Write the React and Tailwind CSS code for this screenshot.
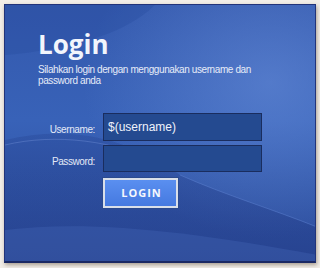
import React from "react";

export default function App() {
  return (
    <div className="w-[320px] h-[268px] bg-[#f2eee8] pt-[4px] pl-[4px] overflow-hidden">
      <div
        className="relative w-[312px] h-[259px] border border-[#22347a] border-b-2 border-b-[#1b2963] shadow-[1px_2px_4px_rgba(80,60,40,0.45)] overflow-hidden bg-[linear-gradient(180deg,#3459ad_0%,#3862b8_45%,#3358aa_70%,#2e4d9c_100%)]"
      >
        <svg
          className="absolute inset-0"
          width="312"
          height="259"
          viewBox="0 0 312 259"
          preserveAspectRatio="none"
        >
          <defs>
            <radialGradient id="glow" cx="0.85" cy="0.3" r="0.6">
              <stop offset="0" stopColor="#6a90dc" stopOpacity="0.55" />
              <stop offset="1" stopColor="#6a90dc" stopOpacity="0" />
            </radialGradient>
            <linearGradient id="dark" x1="0" y1="0" x2="0" y2="1">
              <stop offset="0" stopColor="#1d3580" stopOpacity="0.22" />
              <stop offset="1" stopColor="#1d3580" stopOpacity="0.42" />
            </linearGradient>
          </defs>
          <rect x="0" y="0" width="312" height="259" fill="url(#glow)" />
          <path d="M0 0 L150 0 C120 30 60 45 0 50 Z" fill="#264a9c" opacity="0.3" />
          <path d="M0 135 C60 120 120 130 175 170 C220 190 270 205 312 222 L312 259 L0 259 Z" fill="url(#dark)" />
          <path d="M0 140 C50 128 110 135 160 160" stroke="#7d9be0" strokeOpacity="0.35" strokeWidth="1" fill="none" />
          <path d="M0 225 C80 215 180 225 312 250 L312 259 L0 259 Z" fill="#4468b8" opacity="0.35" />
          <path d="M175 170 C220 190 270 205 312 222" stroke="#5b7fcf" strokeOpacity="0.5" strokeWidth="1" fill="none" />
        </svg>

        <div className="relative flex flex-col pl-[33px] pt-[26px]">
          <div className="text-[26px] leading-[26px] font-bold text-[#f2f5fc] font-['Open_Sans',sans-serif]">
            Login
          </div>
          <div className="mt-[7px] text-[10px] leading-[11px] tracking-[-0.4px] text-[#e6ecf8] font-['Liberation_Sans',Arial,sans-serif] w-[230px]">
            Silahkan login dengan menggunakan username dan password anda
          </div>

          <div className="mt-[27px] flex flex-col gap-[4px] font-['Liberation_Sans',Arial,sans-serif]">
            <div className="flex items-center gap-[7px]">
              <div className="w-[57px] pt-[5px] text-right text-[10px] tracking-[-0.4px] text-[#e3e9f6]">
                Username:
              </div>
              <div className="ml-[1px] w-[159px] h-[28px] bg-[#244a90] border border-[#1a2d5e] flex items-center pl-[4px] text-[12px] text-[#eef2fb]">
                $(username)
              </div>
            </div>
            <div className="flex items-center gap-[7px]">
              <div className="w-[57px] pt-[5px] text-right text-[10px] tracking-[-0.4px] text-[#e3e9f6]">
                Password:
              </div>
              <div className="ml-[1px] w-[159px] h-[27px] bg-[#244a90] border border-[#1a2d5e]" />
            </div>
            <div className="flex pl-[65px] mt-[2px]">
              <div className="w-[75px] h-[30px] border-2 border-[#d9dfe9] outline outline-1 outline-[#2b4a8e] bg-[linear-gradient(180deg,#5a8ff0_0%,#4579e0_100%)] flex items-center justify-center pl-[2px] text-[11px] font-bold tracking-[1px] text-[#f4f7fd] font-['Open_Sans',sans-serif]">
                LOGIN
              </div>
            </div>
          </div>
        </div>
      </div>
    </div>
  );
}
